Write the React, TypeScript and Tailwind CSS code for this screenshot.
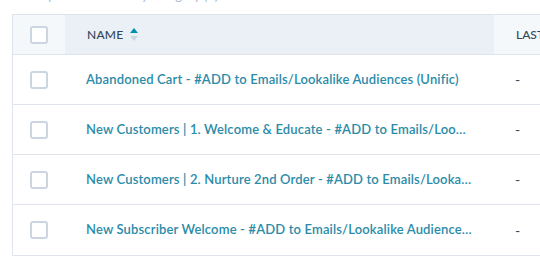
const rows = [
  'Abandoned Cart - #ADD to Emails/Lookalike Audiences (Unific)',
  'New Customers | 1. Welcome & Educate - #ADD to Emails/Lookalike Audiences (Unific)',
  'New Customers | 2. Nurture 2nd Order - #ADD to Emails/Lookalike Audiences (Unific)',
  'New Subscriber Welcome - #ADD to Emails/Lookalike Audiences (Unific)',
];

function Checkbox() {
  return <div className="w-[18px] h-[18px] rounded-[3px] border-2 border-[#cbd6e2] bg-white" />;
}

export default function App() {
  return (
    <div className="w-[540px] h-[265px] overflow-hidden bg-white font-['Lato','Liberation_Sans',sans-serif]">
      <div className="h-[14px] overflow-hidden pl-[30px]">
        <p className="-mt-[14px] text-[13px] leading-[18px] text-[#a9b9cc]">Sequences sorted by category (4)</p>
      </div>
      <div className="ml-[12px] w-[600px] border-l border-t border-b border-[#dfe3eb]">
        <div className="flex h-[40px] border-b border-[#dfe3eb]">
          <div className="w-[52px] shrink-0 bg-[#f5f8fa] flex items-center justify-center">
            <Checkbox />
          </div>
          <div className="w-[429px] shrink-0 bg-[#eaf0f6] flex items-center pl-[22px] gap-[7px]">
            <span className="text-[12px] font-medium text-[#33475b] tracking-[0.2px]">NAME</span>
            <svg width="8" height="13" viewBox="0 0 8 13">
              <path d="M4 0 L8 5 L0 5 Z" fill="#0091ae" />
              <path d="M0 8 L8 8 L4 13 Z" fill="#cbd6e2" />
            </svg>
          </div>
          <div className="flex-1 bg-[#f5f8fa] flex items-center pl-[22px]">
            <span className="text-[12px] font-medium text-[#33475b]">LAST</span>
          </div>
        </div>
        {rows.map((name, i) => (
          <div key={i} className={`flex h-[50px] ${i < rows.length - 1 ? 'border-b border-[#dfe3eb]' : ''}`}>
            <div className="w-[52px] shrink-0 flex items-center justify-center">
              <Checkbox />
            </div>
            <div className="w-[429px] shrink-0 flex items-center pl-[21px] pr-[22px] min-w-0">
              <span className="truncate text-[13px] font-semibold tracking-[0.15px] text-[#2b8ba8]">{name}</span>
            </div>
            <div className="flex-1 flex items-center pl-[21px]">
              <span className="text-[14px] text-[#33475b]">-</span>
            </div>
          </div>
        ))}
      </div>
    </div>
  );
}
